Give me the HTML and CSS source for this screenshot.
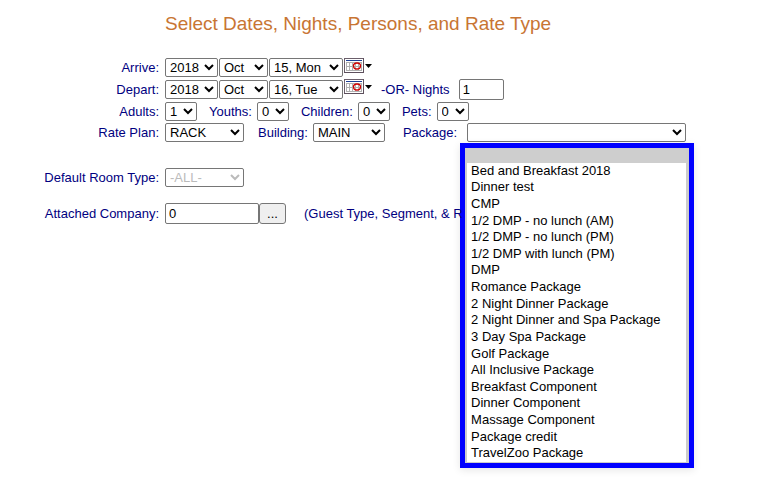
FILE: index.html
```html
<!DOCTYPE html>
<html lang="en">
<head>
  <meta charset="UTF-8">
  <meta name="viewport" content="width=device-width, initial-scale=1">
  <title>Select Dates, Nights, Persons, and Rate Type</title>
  <link rel="stylesheet" href="styles.css">
</head>
<body>

  <!-- shared calendar icon -->
  <svg class="sprite" aria-hidden="true">
    <symbol id="calendar" viewBox="0 0 28 16">
      <rect x="0.5" y="0.5" width="19" height="14" fill="#fff" stroke="#6b5f6b"/>
      <path d="M0 14.5H19.5V0" fill="none" stroke="#5d505d"/>
      <rect x="2" y="2" width="16" height="1" fill="#1c3f94"/>
      <path d="M2.5 4V13M5.5 4V13M8.5 4V13M11.5 4V13M14.5 4V13M17.5 4V13M2 4.5H18M2 8.5H18M2 12.5H18" fill="none" stroke="#b0b0b0"/>
      <ellipse cx="13" cy="8" rx="3.5" ry="3" fill="none" stroke="#d00000" stroke-width="1.3"/>
      <path d="M21 6H28L24.5 10Z" fill="#000"/>
    </symbol>
  </svg>

  <form class="booking">
    <h1 class="title">Select Dates, Nights, Persons, and Rate Type</h1>

    <div class="row">
      <label class="name" for="arriveYear">Arrive:</label>
      <div class="fields dates">
        <select id="arriveYear" class="year"><option>2018</option></select>
        <select class="month" aria-label="Arrive month"><option>Oct</option></select>
        <select class="day" aria-label="Arrive day"><option>15, Mon</option></select>
        <button type="button" class="calendar" aria-label="Pick arrival date"><svg><use href="#calendar"/></svg></button>
      </div>
    </div>

    <div class="row">
      <label class="name" for="departYear">Depart:</label>
      <div class="fields dates">
        <select id="departYear" class="year"><option>2018</option></select>
        <select class="month" aria-label="Depart month"><option>Oct</option></select>
        <select class="day" aria-label="Depart day"><option>16, Tue</option></select>
        <button type="button" class="calendar" aria-label="Pick departure date"><svg><use href="#calendar"/></svg></button>
        <label class="or-nights" for="nights">-OR- Nights</label>
        <input id="nights" class="nights" type="text" value="1">
      </div>
    </div>

    <div class="row">
      <label class="name" for="adults">Adults:</label>
      <div class="fields persons">
        <select id="adults" class="count"><option>1</option></select>
        <div class="field">
          <label for="youths">Youths:</label>
          <select id="youths" class="count"><option>0</option></select>
        </div>
        <div class="field">
          <label for="children">Children:</label>
          <select id="children" class="count"><option>0</option></select>
        </div>
        <div class="field">
          <label for="pets">Pets:</label>
          <select id="pets" class="count"><option>0</option></select>
        </div>
      </div>
    </div>

    <div class="row rates">
      <label class="name" for="ratePlan">Rate Plan:</label>
      <div class="fields">
        <select id="ratePlan" class="plan"><option>RACK</option></select>
        <div class="field building">
          <label for="building">Building:</label>
          <select id="building" class="building-select"><option>MAIN</option></select>
        </div>
        <div class="field package">
          <label for="package">Package:</label>
          <div class="dropdown">
            <select id="package" class="package-select"><option></option></select>
            <div class="menu">
              <ul class="options" role="listbox" aria-label="Package">
                <li class="selected" role="option" aria-selected="true"></li>
                <li role="option">Bed and Breakfast 2018</li>
                <li role="option">Dinner test</li>
                <li role="option">CMP</li>
                <li role="option">1/2 DMP - no lunch (AM)</li>
                <li role="option">1/2 DMP - no lunch (PM)</li>
                <li role="option">1/2 DMP with lunch (PM)</li>
                <li role="option">DMP</li>
                <li role="option">Romance Package</li>
                <li role="option">2 Night Dinner Package</li>
                <li role="option">2 Night Dinner and Spa Package</li>
                <li role="option">3 Day Spa Package</li>
                <li role="option">Golf Package</li>
                <li role="option">All Inclusive Package</li>
                <li role="option">Breakfast Component</li>
                <li role="option">Dinner Component</li>
                <li role="option">Massage Component</li>
                <li role="option">Package credit</li>
                <li role="option">TravelZoo Package</li>
              </ul>
            </div>
          </div>
        </div>
      </div>
    </div>

    <div class="row room">
      <label class="name" for="roomType">Default Room Type:</label>
      <div class="fields">
        <select id="roomType" class="plan" disabled><option>-ALL-</option></select>
      </div>
    </div>

    <div class="row company">
      <label class="name" for="company">Attached Company:</label>
      <div class="fields">
        <input id="company" class="company-input" type="text" value="0">
        <button type="button" class="browse">...</button>
        <span class="hint">(Guest Type, Segment, &amp; R</span>
      </div>
    </div>
  </form>

</body>
</html>
```

FILE: styles.css
```css
body {
  margin: 0;
  min-height: 100vh;
  background: #fff;
  color: #000080;
}

body, select, input, button {
  font-family: "Liberation Sans", Arial, sans-serif;
  font-size: 13px;
}

.sprite {
  position: absolute;
  width: 0;
  height: 0;
}

.booking {
  padding-top: 12px;
}

.title {
  margin: 0 0 20px 165px;
  font-size: 19px;
  line-height: 24px;
  font-weight: normal;
  color: #c87533;
}

/* Label column + controls */
.row {
  display: grid;
  grid-template-columns: 159px 1fr;
  column-gap: 6px;
  align-items: center;
  min-height: 22px;
  white-space: nowrap;
}
.name {
  text-align: right;
}
.fields, .field {
  display: flex;
  align-items: center;
}
.field {
  gap: 5px;
}
.dates {
  gap: 1px;
}
.persons {
  gap: 12px;
}

select, input {
  box-sizing: border-box;
  margin: 0;
  border: 1px solid #767676;
  border-radius: 2px;
  background-color: #fff;
  color: #000;
}
select {
  height: 19px;
  padding: 0;
}
select:disabled {
  opacity: 1;
  color: #bbb;
}
input {
  height: 21px;
  padding: 1px 3px;
}

.year { width: 53px; }
.month { width: 49px; }
.day { width: 74px; }
.count { width: 32px; }
.plan { width: 79px; }
.building-select { width: 72px; }
.package-select { width: 100%; }
.nights { width: 45px; }
.company-input { width: 94px; }

.calendar {
  align-self: flex-start;
  padding: 0;
  border: 0;
  background: none;
}
.calendar svg {
  display: block;
  width: 28px;
  height: 16px;
}
.or-nights {
  margin: 0 8px;
}

.rates {
  min-height: 20px;
}
.building {
  margin-left: 14px;
}
.package {
  margin-left: 18px;
  gap: 10px;
}

/* Open package list */
.dropdown {
  position: relative;
  display: flex;
  width: 219px;
}
.menu {
  position: absolute;
  top: 20px;
  left: -7px;
  border: 5px solid #0000ff;
  padding: 1px 3px 1px 2px;
  background: #ccc;
  box-shadow: 0 2px 8px rgba(0, 0, 0, 0.1);
}
.options {
  display: grid;
  grid-template-rows: 14px;
  grid-auto-rows: 1fr;
  align-items: center;
  box-sizing: border-box;
  width: 219px;
  height: 313px;
  margin: 0;
  padding: 0;
  list-style: none;
  background: #fff;
  color: #000;
}
.options li {
  padding-left: 4px;
  line-height: 16px;
}
.options .selected {
  height: 14px;
  background: #cecece;
}

.room {
  margin-top: 24px;
}
.company {
  margin-top: 14px;
}
.browse {
  box-sizing: border-box;
  width: 27px;
  height: 21px;
  padding: 0;
  border: 1px solid #767676;
  border-radius: 3px;
  background: #efefef;
  color: #000;
}
.hint {
  position: relative;
  z-index: 1;
  margin-left: 18px;
}
```
